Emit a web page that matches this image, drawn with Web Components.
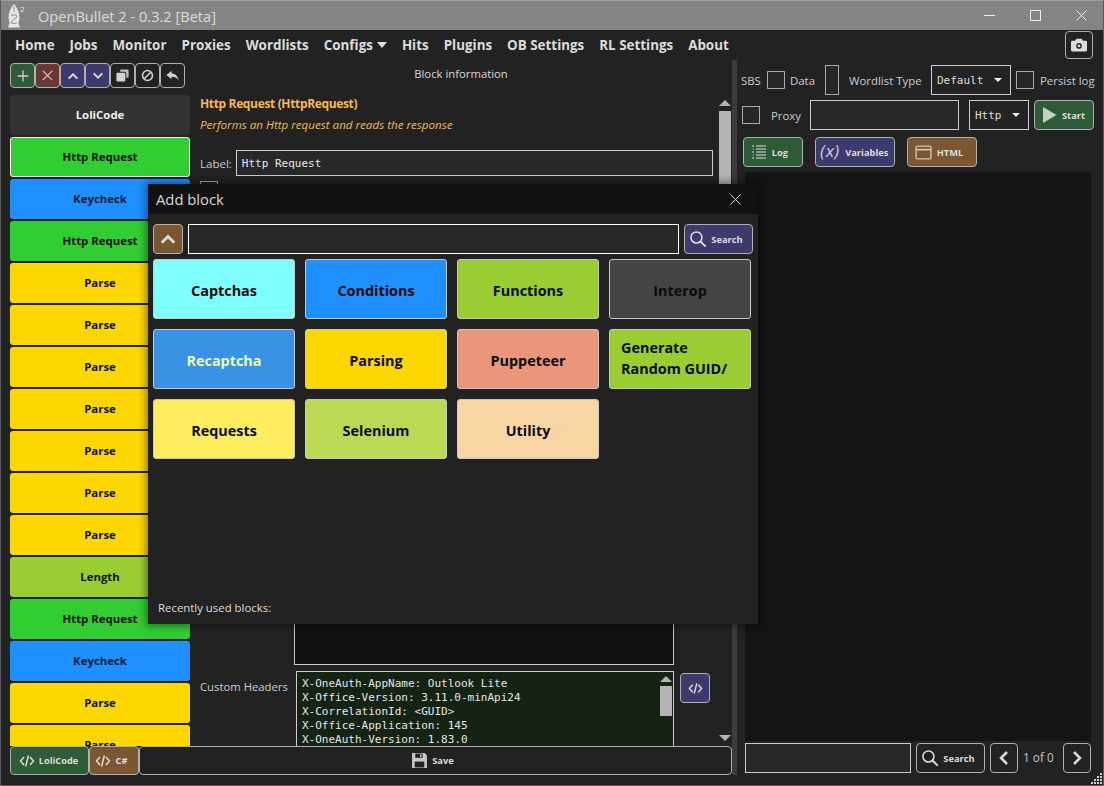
<!DOCTYPE html>
<html>
<head>
<meta charset="utf-8">
<title>OpenBullet 2</title>
<style>
  html, body { margin: 0; height: 100%; background: #222; overflow: hidden; }
  body { font-family: "Open Sans", "Noto Sans", sans-serif; color: #ddd; }
</style>
</head>
<body>
<ob-window>
  <ob-titlebar slot="title"></ob-titlebar>
  <ob-nav slot="nav"></ob-nav>
  <ob-blocks slot="left"></ob-blocks>
  <ob-editor slot="center"></ob-editor>
  <ob-debugger slot="right"></ob-debugger>
  <ob-add-block slot="modal"></ob-add-block>
</ob-window>

<script>
const ICONS = {
  plus: '<path d="M8 2.500v11M2.500 8h11" stroke="#d0d0d0" stroke-width="1.300" fill="none"/>',
  cross: '<path d="M3 3l10 10M13 3L3 13" stroke="#d0d0d0" stroke-width="1.200" fill="none"/>',
  up: '<path d="M3 11l5-5 5 5" stroke="currentColor" stroke-width="2.200" fill="none"/>',
  down: '<path d="M3 5l5 5 5-5" stroke="currentColor" stroke-width="2.200" fill="none"/>',
  clone: '<path d="M6.500 1.500h7a1 1 0 0 1 1 1v7a1 1 0 0 1-1 1H12V6a2 2 0 0 0-2-2H5.500V2.500a1 1 0 0 1 1-1z" fill="#bdbdbd"/><rect x="1.500" y="5" width="9.500" height="9.500" rx="1.200" fill="#d4d4d4"/>',
  ban: '<circle cx="8" cy="8" r="5.300" stroke="#d0d0d0" stroke-width="1.700" fill="none"/><path d="M4.500 11.500l7-7" stroke="#d0d0d0" stroke-width="1.700"/>',
  reply: '<path d="M7 3L1.500 7.500 7 12V9.400c3 0 5.600.8 7.500 3.600-.6-4-3.400-7-7.500-7.400z" fill="#d0d0d0"/>',
  code: '<path d="M5 4L1.500 8 5 12M11 4l3.500 4L11 12M9.400 2.500L6.600 13.500" stroke="currentColor" stroke-width="1.500" fill="none"/>',
  search: '<circle cx="6.600" cy="6.600" r="4.900" stroke="currentColor" stroke-width="1.400" fill="none"/><path d="M10.200 10.200l4.600 4.600" stroke="currentColor" stroke-width="1.800"/>',
  save: '<path d="M1 1h12l2 2v12H1z" fill="#c8c8c8"/><path d="M4 1.500h7v4H4z" fill="#222"/><path d="M8.500 2.300h1.500v2.400H8.500z" fill="#c8c8c8"/><path d="M3.500 9h9v5.500h-9z" fill="#222"/>',
  log: '<path d="M5 2h10M5 5h10M5 8h10M5 11h10M5 14h10" stroke="currentColor" stroke-width="1"/><path d="M1 2h2M1 8h2M1 14h2M2 5h1M2 11h1" stroke="currentColor" stroke-width="1"/>',
  html: '<rect x="1" y="2" width="14" height="12" rx="1" stroke="#cfc6b8" stroke-width="1.300" fill="none"/><path d="M1 5.300h14" stroke="#cfc6b8" stroke-width="1.600"/>',
  play: '<path d="M2 0l13.500 8L2 16z" fill="#c6d0c7"/>',
  left: '<path d="M11 2L5 8l6 6" stroke="#d8d8d8" stroke-width="2.600" fill="none"/>',
  right: '<path d="M5 2l6 6-6 6" stroke="#d8d8d8" stroke-width="2.600" fill="none"/>',
  camera: '<path d="M5.600 2.500h4.800l1 1.800h2.700a1 1 0 0 1 1 1v7.400a1 1 0 0 1-1 1H1.900a1 1 0 0 1-1-1V5.300a1 1 0 0 1 1-1h2.700z" fill="currentColor"/><circle cx="8" cy="8.800" r="2.500" fill="#222"/><circle cx="8" cy="8.800" r="1.300" fill="currentColor"/>'
};
const svg = (name, size) => `<svg width="${size}" height="${size}" viewBox="0 0 16 16" aria-hidden="true">${ICONS[name]}</svg>`;

class ObWindow extends HTMLElement {
  constructor() {
    super();
    this.attachShadow({ mode: 'open' });
    const dots = [[9, 0], [6, 3], [9, 3], [3, 6], [6, 6], [9, 6], [0, 9], [3, 9], [6, 9], [9, 9]];
    this.shadowRoot.innerHTML = `
      <style>
        :host { display: block; position: relative; width: 1104px; height: 786px; background: #222; overflow: hidden; }
        .frame { display: flex; flex-direction: column; height: 100%; box-sizing: border-box; padding-bottom: 11px; }
        .main { flex: 1; min-height: 0; display: flex; padding-left: 10px; }
        ::slotted([slot=left]) { flex: none; width: 180px; }
        ::slotted([slot=center]) { flex: none; width: 542px; }
        ::slotted([slot=right]) { flex: none; width: 360px; }
        .split { flex: none; width: 5px; background: #3c3c3c; }
        .edge { position: absolute; inset: 0; border: 1px solid #5c5c5c; border-top: 0; pointer-events: none; }
        .grip { position: absolute; right: 2px; bottom: 2px; display: block; }
      </style>
      <div class="frame">
        <slot name="title"></slot>
        <slot name="nav"></slot>
        <div class="main">
          <slot name="left"></slot>
          <slot name="center"></slot>
          <div class="split"></div>
          <slot name="right"></slot>
        </div>
      </div>
      <slot name="modal"></slot>
      <svg class="grip" width="11" height="11">${dots.map(([x, y]) => `<rect x="${x}" y="${y}" width="2" height="2" fill="#cfcfcf"/>`).join('')}</svg>
      <div class="edge"></div>
    `;
  }
}

class ObTitlebar extends HTMLElement {
  constructor() {
    super();
    this.attachShadow({ mode: 'open' });
    this.shadowRoot.innerHTML = `
      <style>
        :host { display: flex; align-items: center; height: 30px; box-sizing: border-box; background: #848484; border-top: 1px solid #a0a0a0; color: #dcdcdc; font: 14.6px "Open Sans", sans-serif; }
        .logo { position: relative; margin-left: 7px; width: 19px; height: 26px; flex: none; }
        .logo svg { width: 14px; height: 26px; }
        .logo span { position: absolute; left: 13px; top: 1px; font-size: 8px; line-height: 10px; color: #e8e8e8; }
        .name { margin-left: 12px; white-space: nowrap; }
        .caps { margin-left: auto; display: flex; }
        .cap { width: 46px; height: 29px; display: flex; align-items: center; justify-content: center; }
        svg { display: block; }
      </style>
      <div class="logo">
        <svg viewBox="0 0 14 26">
          <path d="M7 1c3.500 3.500 5.500 9 5.500 14l-1 5 1.500 4.500H1L2.500 20l-1-5C1.500 10 3.500 4.500 7 1z" fill="#e6e6e6"/>
          <path d="M4 13c1-1.500 5-1.500 6 0 0 2-5 4-6 7 2 .6 4 .6 6 0M7 3.500V9" stroke="#8c8c8c" stroke-width="1" fill="none"/>
        </svg>
        <span>2</span>
      </div>
      <span class="name">OpenBullet 2 - 0.3.2 [Beta]</span>
      <div class="caps">
        <div class="cap"><svg width="11" height="11"><path d="M0 5.500h11" stroke="#eee"/></svg></div>
        <div class="cap"><svg width="11" height="11"><rect x=".5" y=".5" width="10" height="10" fill="none" stroke="#eee"/></svg></div>
        <div class="cap"><svg width="11" height="11"><path d="M.5.500l10 10M10.500.500l-10 10" stroke="#eee"/></svg></div>
      </div>
    `;
  }
}

class ObNav extends HTMLElement {
  constructor() {
    super();
    this.attachShadow({ mode: 'open' });
    const items = ['Home', 'Jobs', 'Monitor', 'Proxies', 'Wordlists', 'Configs', 'Hits', 'Plugins', 'OB Settings', 'RL Settings', 'About'];
    this.shadowRoot.innerHTML = `
      <style>
        :host { display: flex; align-items: center; height: 30px; padding-left: 15px; padding-right: 11px; color: #dcdcdc; font: 700 13.4px "Open Sans", sans-serif; }
        .links { display: flex; align-items: center; gap: 15px; white-space: nowrap; }
        .caret { display: inline-block; margin-left: 4px; vertical-align: 2px; border: 5px solid transparent; border-top: 6px solid #ddd; border-bottom: 0; }
        ob-btn { margin-left: auto; }
      </style>
      <div class="links">${items.map(t => `<span>${t}${t === 'Configs' ? '<i class="caret"></i>' : ''}</span>`).join('')}</div>
      <ob-btn kind="dark" w="28" h="28">${svg('camera', 18)}</ob-btn>
    `;
  }
}

class ObBtn extends HTMLElement {
  constructor() {
    super();
    this.attachShadow({ mode: 'open' });
    const colors = { dark: '#222', green: '#2f5c38', red: '#6b3636', indigo: '#3d3b6e', brown: '#7a5730' };
    const kind = this.getAttribute('kind') || 'dark';
    const w = this.getAttribute('w') || 25, h = this.getAttribute('h') || 25;
    const pr = this.getAttribute('pr') || 0;
    this.shadowRoot.innerHTML = `
      <style>
        :host { display: inline-flex; flex: none; box-sizing: border-box; width: ${w}px; height: ${h}px; padding-right: ${pr}px; align-items: center; justify-content: center; gap: ${this.getAttribute('gap') || 5}px;
                background: ${colors[kind]}; border: 1px solid #b0b0b0; border-radius: 4px; color: #ddd; font: 700 9.3px "Open Sans", sans-serif; white-space: nowrap; }
      </style>
      <slot></slot>
    `;
  }
}

class ObBlock extends HTMLElement {
  constructor() {
    super();
    this.attachShadow({ mode: 'open' });
    this.shadowRoot.innerHTML = `
      <style>
        :host { display: flex; flex: none; box-sizing: border-box; height: 40px; padding-bottom: 1px; align-items: center; justify-content: center; border-radius: 3px; color: #111; font: 700 11.4px "Open Sans", sans-serif; background: var(--bg); }
        :host([selected]) { border: 1px solid #fff; }
      </style>
      <slot></slot>
    `;
  }
}

class ObBlocks extends HTMLElement {
  constructor() {
    super();
    this.attachShadow({ mode: 'open' });
    const c = { l: '#333333', h: '#32cd32', k: '#1e90ff', p: '#ffd700', n: '#9acd32' };
    const list = [['LoliCode', 'l'], ['Http Request', 'h'], ['Keycheck', 'k'], ['Http Request', 'h'], ['Parse', 'p'], ['Parse', 'p'], ['Parse', 'p'], ['Parse', 'p'], ['Parse', 'p'], ['Parse', 'p'], ['Parse', 'p'], ['Length', 'n'], ['Http Request', 'h'], ['Keycheck', 'k'], ['Parse', 'p'], ['Parse', 'p']];
    const tools = [['green', 'plus', 16], ['red', 'cross', 15], ['indigo', 'up', 14], ['indigo', 'down', 14], ['dark', 'clone', 15], ['dark', 'ban', 15], ['dark', 'reply', 15]];
    this.shadowRoot.innerHTML = `
      <style>
        :host { display: flex; flex-direction: column; min-height: 0; }
        .tools { display: flex; flex: none; margin-top: 3px; height: 25px; }
        .list { flex: 1; min-height: 0; margin: 7px 0 29px; display: flex; flex-direction: column; gap: 2px; overflow: hidden; }
        ob-block.l { color: #eee; }
        ob-block.k { color: #071a3a; }
        svg { display: block; }
      </style>
      <div class="tools">${tools.map(([k, i, s]) => `<ob-btn kind="${k}">${svg(i, s)}</ob-btn>`).join('')}</div>
      <div class="list">${list.map(([t, k], i) => `<ob-block class="${k}" style="--bg:${c[k]}"${i === 1 ? ' selected' : ''}>${t}</ob-block>`).join('')}</div>
    `;
  }
}

class ObEditor extends HTMLElement {
  constructor() {
    super();
    this.attachShadow({ mode: 'open' });
    this.shadowRoot.innerHTML = `
      <style>
        :host { display: flex; flex-direction: column; min-height: 0; position: relative; font: 11.3px "Open Sans", sans-serif; color: #ccc; }
        .head { flex: none; text-align: center; height: 35px; line-height: 28px; color: #d8d8d8; }
        .body { flex: 1; min-height: 0; display: flex; }
        .scroll { flex: 1; min-width: 0; overflow: hidden; padding: 0 0 0 10px; display: flex; flex-direction: column; }
        h3 { margin: 0; height: 18px; line-height: 18px; font-size: 12px; font-weight: 700; color: #f6b84e; letter-spacing: -.35px; }
        .desc { margin-top: 3px; height: 18px; line-height: 18px; font-size: 11.6px; font-style: italic; color: #f6b84e; }
        .label { margin-top: 16px; display: flex; align-items: center; gap: 4px; flex: none; font-size: 11.500px; }
        .field { box-sizing: border-box; flex: 1; display: flex; align-items: center; height: 26px; margin-right: 5px; padding-left: 5px; background: #282828; border: 1px solid #ccc; font: 11px "DejaVu Sans Mono", monospace; color: #e8e8e8; }
        .check { flex: none; box-sizing: border-box; width: 18px; height: 18px; margin-top: 5px; border: 1px solid #aaa; }
        .spacer { flex: 1; min-height: 0; }
        .blank { flex: none; box-sizing: border-box; margin-left: 94px; width: 380px; height: 60px; background: #101010; border: 1px solid #ccc; border-top: 0; }
        .headers { flex: none; display: flex; margin-top: 6px; height: 75px; }
        .headers label { width: 96px; padding-top: 8px; flex: none; line-height: 16px; }
        .txt { position: relative; box-sizing: border-box; width: 378px; height: 75px; overflow: hidden; background: #132413; border: 1px solid #ccc; border-bottom: 0; padding: 5px 5px; font: 11px/14.1px "DejaVu Sans Mono", monospace; color: #e6e6e6; white-space: pre; }
        .tb { position: absolute; right: 1px; top: 4px; width: 12px; }
        .thumb { height: 30px; margin-top: 4px; background: #b4b4b4; }
        .up { width: 0; margin: 0 auto; border: 6px solid transparent; border-top: 0; border-bottom: 6px solid #b4b4b4; }
        .dn { width: 0; margin: 0 auto; border: 6px solid transparent; border-bottom: 0; border-top: 6px solid #b4b4b4; }
        .headers ob-btn { margin: 2px 0 0 6px; }
        .bar { flex: none; width: 14px; position: relative; }
        .bar .up { position: absolute; top: 5px; left: 1px; }
        .bar .thumb { position: absolute; top: 16px; left: 1px; width: 12px; height: 90px; margin: 0; }
        .bar .dn { position: absolute; bottom: 5px; left: 1px; }
        .foot { flex: none; display: flex; height: 29px; margin-left: -180px; width: 722px; }
        svg { display: block; }
      </style>
      <div class="head">Block information</div>
      <div class="body">
        <div class="scroll">
          <h3>Http Request (HttpRequest)</h3>
          <div class="desc">Performs an Http request and reads the response</div>
          <div class="label"><span>Label:</span><div class="field">Http Request</div></div>
          <div class="check"></div>
          <div class="spacer"></div>
          <div class="blank"></div>
          <div class="headers">
            <label>Custom Headers</label>
            <div class="txt">X-OneAuth-AppName: Outlook Lite
X-Office-Version: 3.11.0-minApi24
X-CorrelationId: &lt;GUID&gt;
X-Office-Application: 145
X-OneAuth-Version: 1.83.0<div class="tb"><div class="up"></div><div class="thumb"></div></div></div>
            <ob-btn kind="indigo" w="30" h="30">${svg('code', 15)}</ob-btn>
          </div>
        </div>
        <div class="bar"><div class="up"></div><div class="thumb"></div><div class="dn"></div></div>
      </div>
      <div class="foot">
        <ob-btn kind="green" w="79" h="29" gap="4" pr="2">${svg('code', 16)}LoliCode</ob-btn>
        <ob-btn kind="brown" w="50" h="29" gap="5" pr="6">${svg('code', 16)}C#</ob-btn>
        <ob-btn kind="dark" w="593" h="29" gap="4" pr="6">${svg('save', 17)}Save</ob-btn>
      </div>
    `;
  }
}

class ObDebugger extends HTMLElement {
  constructor() {
    super();
    this.attachShadow({ mode: 'open' });
    this.shadowRoot.innerHTML = `
      <style>
        :host { display: flex; flex-direction: column; min-height: 0; font: 11.4px "Open Sans", sans-serif; color: #ccc; box-sizing: border-box; padding-left: 4px; }
        .row { display: flex; align-items: center; flex: none; white-space: nowrap; }
        .r1 { height: 30px; margin-top: 5px; }
        .r2 { height: 30px; margin-top: 5px; padding-left: 1px; }
        .r3 { height: 30px; margin-top: 7px; padding-left: 2px; gap: 12px; }
        .cb { box-sizing: border-box; flex: none; width: 18px; height: 18px; border: 1px solid #aaa; background: #262626; }
        .tall { width: 14px; height: 30px; }
        .sel { box-sizing: border-box; flex: none; height: 30px; display: flex; align-items: center; justify-content: space-between; padding: 0 5px; background: #232323; border: 1px solid #ccc; font: 11px "DejaVu Sans Mono", monospace; color: #ddd; }
        .sel i { border: 4px solid transparent; border-top: 4px solid #eee; border-bottom: 0; margin-right: 3px; }
        .inp { box-sizing: border-box; flex: none; height: 30px; background: #282828; border: 1px solid #ccc; }
        .lbl { flex: none; }
        .log { flex: 1; min-height: 0; margin: 5px 6px 2px 4px; background: #141414; }
        .foot { display: flex; align-items: center; flex: none; height: 30px; margin: 0 0 2px 4px; }
        .pg { box-sizing: border-box; width: 45px; padding-left: 5px; flex: none; color: #c4c4d4; position: relative; top: -1px; font-size: 11.800px; }
        svg { display: block; }
      </style>
      <div class="row r1">
        <span class="lbl" style="width:26px">SBS</span><div class="cb"></div>
        <span class="lbl" style="margin-left:5px;width:35px">Data</span><div class="cb tall"></div>
        <span class="lbl" style="margin-left:10px;width:82px">Wordlist Type</span>
        <div class="sel" style="width:80px">Default<i></i></div>
        <div class="cb" style="margin-left:5px"></div>
        <span class="lbl" style="margin-left:6px">Persist log</span>
      </div>
      <div class="row r2">
        <div class="cb"></div><span class="lbl" style="margin-left:11px;width:39px">Proxy</span>
        <div class="inp" style="width:149px"></div>
        <div class="sel" style="width:60px;margin-left:10px">Http<i></i></div>
        <ob-btn kind="green" w="60" h="30" style="margin-left:5px" gap="5" pr="2">${svg('play', 16)}Start</ob-btn>
      </div>
      <div class="row r3">
        <ob-btn kind="green" w="60" h="30" pr="7">${svg('log', 16)}Log</ob-btn>
        <ob-btn kind="indigo" w="80" h="30" pr="2"><span style="font:italic 400 15px 'DejaVu Sans',sans-serif;color:#c8c8d8">(x)</span>Variables</ob-btn>
        <ob-btn kind="brown" w="70" h="30" pr="6">${svg('html', 17)}HTML</ob-btn>
      </div>
      <div class="log"></div>
      <div class="foot">
        <div class="inp" style="width:166px"></div>
        <ob-btn kind="dark" w="69" h="30" style="margin-left:5px" gap="4" pr="5">${svg('search', 18)}Search</ob-btn>
        <ob-btn kind="dark" w="28" h="30" style="margin-left:5px">${svg('left', 16)}</ob-btn>
        <span class="pg">1 of 0</span>
        <ob-btn kind="dark" w="28" h="30">${svg('right', 16)}</ob-btn>
      </div>
    `;
  }
}

class ObTile extends HTMLElement {
  constructor() {
    super();
    this.attachShadow({ mode: 'open' });
    this.shadowRoot.innerHTML = `
      <style>
        :host { display: flex; box-sizing: border-box; height: 60px; align-items: center; justify-content: center; text-align: center; padding: 2px 11px 0; overflow: hidden;
                border: 1px solid #c8c8c8; border-radius: 3px; background: var(--bg); color: var(--fg, #0b0b0b); font: 700 14.4px/21px "Open Sans", sans-serif; }
        :host([left]) { justify-content: flex-start; text-align: left; padding: 0 11px 2px; }
      </style>
      <slot></slot>
    `;
  }
}

class ObAddBlock extends HTMLElement {
  constructor() {
    super();
    this.attachShadow({ mode: 'open' });
    const tiles = [['Captchas', '#7fffff'], ['Conditions', '#1e90ff'], ['Functions', '#9acd32'], ['Interop', '#444444'], ['Recaptcha', '#3a92e4', '#eaffb0'], ['Parsing', '#ffd700'], ['Puppeteer', '#e9967a'], ['Generate Random GUID/', '#9acd32', '', 1], ['Requests', '#ffed5f'], ['Selenium', '#bada55'], ['Utility', '#fad6a5']];
    this.shadowRoot.innerHTML = `
      <style>
        :host { position: absolute; left: 148px; top: 184px; width: 610px; height: 440px; display: flex; flex-direction: column; background: #222; box-shadow: 0 0 8px 2px rgba(0,0,0,.45); color: #ddd; font: 11.4px "Open Sans", sans-serif; }
        header { flex: none; height: 30px; display: flex; align-items: center; justify-content: space-between; padding: 0 17px 0 8px; background: #111; font-size: 14.8px; color: #d8d8d8; }
        .search { flex: none; display: flex; gap: 5px; padding: 10px 5px 5px; }
        .inp { flex: 1; box-sizing: border-box; height: 30px; background: #282828; border: 1px solid #fff; }
        .grid { flex: 1; min-height: 0; display: grid; grid-template-columns: repeat(4, 142px); grid-auto-rows: 60px; gap: 10px; padding: 0 5px; align-content: start; }
        .recent { flex: none; height: 24px; padding-left: 10px; line-height: 16px; }
        svg { display: block; }
      </style>
      <header><span>Add block</span><svg width="11" height="11"><path d="M.5.500l10 10M10.500.500l-10 10" stroke="#ddd"/></svg></header>
      <div class="search">
        <ob-btn kind="brown" w="30" h="30">${svg('up', 20)}</ob-btn>
        <div class="inp"></div>
        <ob-btn kind="indigo" w="69" h="30" gap="4" pr="5">${svg('search', 18)}Search</ob-btn>
      </div>
      <div class="grid">${tiles.map(([t, bg, fg, left]) => `<ob-tile style="--bg:${bg};${fg ? `--fg:${fg}` : ''}"${left ? ' left' : ''}>${t}</ob-tile>`).join('')}</div>
      <div class="recent">Recently used blocks:</div>
    `;
  }
}

customElements.define('ob-btn', ObBtn);
customElements.define('ob-block', ObBlock);
customElements.define('ob-tile', ObTile);
customElements.define('ob-window', ObWindow);
customElements.define('ob-titlebar', ObTitlebar);
customElements.define('ob-nav', ObNav);
customElements.define('ob-blocks', ObBlocks);
customElements.define('ob-editor', ObEditor);
customElements.define('ob-debugger', ObDebugger);
customElements.define('ob-add-block', ObAddBlock);
</script>
</body>
</html>
